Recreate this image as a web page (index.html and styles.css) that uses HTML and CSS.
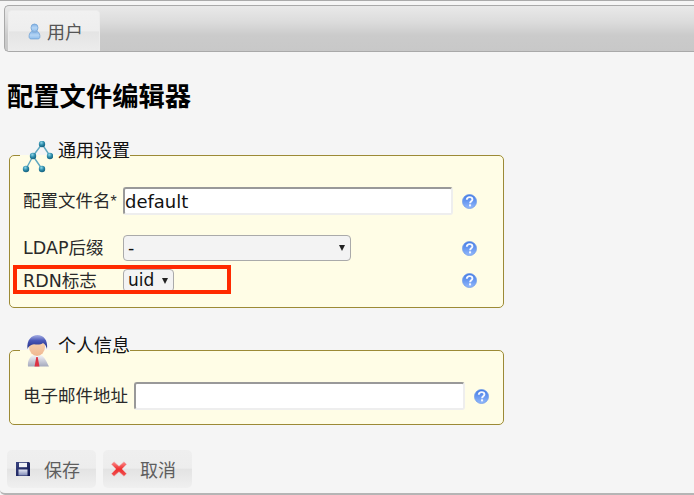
FILE: index.html
```html
<!DOCTYPE html>
<html lang="zh">
<head>
<meta charset="utf-8">
<title>配置文件编辑器</title>
<link rel="stylesheet" href="styles.css">
</head>
<body>
<div class="page">
  <nav class="tabbar">
    <a class="tab">
      <svg class="tab-icon" viewBox="0 0 14 17" width="13" height="17"><defs><linearGradient id="ub" x1="0" y1="0" x2="0" y2="1"><stop offset="0" stop-color="#7fb0e6"/><stop offset=".5" stop-color="#b5d5f4"/><stop offset="1" stop-color="#8fbdec"/></linearGradient></defs><path d="M4 8.200C1.800 9.600 1 12 1.200 14.600c.1 1.300 1.100 1.900 2.300 1.900h7c1.200 0 2.200-.6 2.300-1.900.2-2.600-.6-5-2.800-6.400-.9 .7-2 1-3 1s-2.100-.3-3-1z" fill="url(#ub)" stroke="#6d9fd3" stroke-width=".8"/><ellipse cx="7" cy="4.500" rx="3.800" ry="4.100" fill="url(#ub)" stroke="#6d9fd3" stroke-width=".8"/></svg>
      <span>用户</span>
    </a>
  </nav>
  <h1 class="title">配置文件编辑器</h1>

  <fieldset class="group group-general">
    <legend class="legend">
      <svg class="legend-icon icon-tree" viewBox="0 0 32 32" width="32" height="32">
        <defs><radialGradient id="node" cx=".4" cy=".3" r=".75"><stop offset="0" stop-color="#8fd6e8"/><stop offset=".5" stop-color="#2c8cab"/><stop offset="1" stop-color="#125a78"/></radialGradient></defs>
        <path d="M21 3 12 15M21 3l8 12M12 15 5 28M12 15l9 13" fill="none" stroke="#5fa8c0" stroke-width="1.400"/>
        <circle cx="21" cy="3" r="3.200" fill="url(#node)"/>
        <circle cx="12" cy="15" r="3.200" fill="url(#node)"/>
        <circle cx="29" cy="15" r="3.200" fill="url(#node)"/>
        <circle cx="5" cy="28" r="3.200" fill="url(#node)"/>
        <circle cx="21" cy="28" r="3.200" fill="url(#node)"/>
      </svg>
      <span class="legend-text">通用设置</span>
    </legend>
    <div class="form">
      <div class="row row-general row-text">
        <label class="label">配置文件名<span class="req">*</span></label>
        <input class="text-input" type="text" value="default">
        <svg class="help" viewBox="0 0 16 16" width="15" height="15"><use href="#help"/></svg>
      </div>
      <div class="row row-general row-wide">
        <label class="label">LDAP后缀</label>
        <div class="select-wrap wide"><select class="select"><option>-</option></select></div>
        <svg class="help" viewBox="0 0 16 16" width="15" height="15"><use href="#help"/></svg>
      </div>
      <div class="row row-general row-narrow">
        <label class="label">RDN标志</label>
        <div class="select-wrap narrow"><select class="select"><option>uid</option></select></div>
        <svg class="help" viewBox="0 0 16 16" width="15" height="15"><use href="#help"/></svg>
      </div>
    </div>
    <div class="highlight"></div>
  </fieldset>

  <fieldset class="group group-personal">
    <legend class="legend">
      <svg class="legend-icon icon-person" viewBox="0 0 32 33" width="32" height="33">
        <defs>
          <linearGradient id="hair" x1="0" y1="0" x2="0" y2="1"><stop offset="0" stop-color="#a8b0e4"/><stop offset=".4" stop-color="#4a58b8"/><stop offset="1" stop-color="#1e2a80"/></linearGradient>
          <linearGradient id="suit" x1="0" y1="0" x2="0" y2="1"><stop offset="0" stop-color="#f4f4f8"/><stop offset="1" stop-color="#a4a8bc"/></linearGradient>
          <linearGradient id="skin" x1="0" y1="0" x2="0" y2="1"><stop offset="0" stop-color="#f9d8b8"/><stop offset="1" stop-color="#f0b890"/></linearGradient>
        </defs>
        <path d="M7 32.500c-.5-5 1-9.500 5.500-11.500h7c4.500 2 6 6.500 8.500 11.500z" fill="url(#suit)"/>
        <path d="M13.500 20.500h5l-2.500 3z" fill="#f9f9f9"/>
        <path d="M15.300 23h1.400l1.800 9.500h-5z" fill="#dd3344"/>
        <ellipse cx="16" cy="13" rx="8" ry="9" fill="url(#skin)"/>
        <path d="M6.500 15C5.500 6 10.500 1 16.500 1s10.500 5 9.500 14c-.8-3-2-5-4-6-2 1.500-5 2-9 1.200-3 .3-5.500 1.800-6.500 4.800z" fill="url(#hair)"/>
      </svg>
      <span class="legend-text">个人信息</span>
    </legend>
    <div class="form">
      <div class="row row-personal">
        <label class="label">电子邮件地址</label>
        <input class="text-input" type="text">
        <svg class="help" viewBox="0 0 16 16" width="15" height="15"><use href="#help"/></svg>
      </div>
    </div>
  </fieldset>

  <div class="actions">
    <button class="btn" type="button">
      <svg class="btn-icon icon-save" viewBox="0 0 14 14" width="14" height="14"><defs><linearGradient id="fl" x1="0" y1="0" x2="1" y2="1"><stop offset="0" stop-color="#39437f"/><stop offset="1" stop-color="#0f1650"/></linearGradient><linearGradient id="fb" x1="0" y1="0" x2="0" y2="1"><stop offset="0" stop-color="#e4e7f2"/><stop offset="1" stop-color="#7f8ab8"/></linearGradient></defs><path d="M0 0h13l1 1v13H0z" fill="url(#fl)"/><rect x="3" y=".8" width="8" height="4.400" fill="#f1f3f8"/><rect x="2.500" y="7.500" width="9" height="6" fill="url(#fb)"/></svg>
      <span>保存</span>
    </button>
    <button class="btn" type="button">
      <svg class="btn-icon" viewBox="0 0 16 16" width="16" height="16"><defs><linearGradient id="xr" x1="0" y1="0" x2="0" y2="1"><stop offset="0" stop-color="#ff8a8a"/><stop offset=".5" stop-color="#ee3030"/><stop offset="1" stop-color="#f05050"/></linearGradient></defs><path d="M3 .8 8 5.200 13 .8l2.500 2.500L11 8l4.500 4.700-2.500 2.500L8 10.800 3 15.200.5 12.700 5 8 .5 3.300z" fill="url(#xr)" stroke="#e8b0b0" stroke-width=".5"/></svg>
      <span>取消</span>
    </button>
  </div>
</div>
<svg class="defs" width="0" height="0">
  <defs>
    <linearGradient id="hb" x1="0" y1="0" x2="0" y2="1"><stop offset="0" stop-color="#3f78e4"/><stop offset="1" stop-color="#93b9fc"/></linearGradient>
    <g id="help">
      <circle cx="8" cy="8" r="7.500" fill="url(#hb)" stroke="#6f9be8" stroke-width=".8"/>
      <path d="M5.100 6.200C5.200 4.300 6.500 3.300 8.100 3.300c1.800 0 3 1 3 2.500 0 2-2.400 2-2.500 4" fill="none" stroke="#f4f7ff" stroke-width="2"/>
      <rect x="7.500" y="11" width="2.200" height="2.200" fill="#f4f7ff"/>
    </g>
  </defs>
</svg>
</body>
</html>
```
FILE: styles.css
```css
* { box-sizing: border-box; }
html, body { margin: 0; padding: 0; height: 100%; }
body {
  background: #f5f5f5;
  font-family: "DejaVu Sans", "Noto Sans CJK SC", sans-serif;
  font-size: 17.5px;
  color: #222;
  overflow: hidden;
}
.defs { position: absolute; }
.page {
  height: 495px;
  padding: 5px 0 0 0;
  border-top: 1px solid #aaa;
  border-bottom: 2px solid #b5b5b5;
  border-bottom-left-radius: 5px;
}
.tabbar {
  margin: -1px 0 0 4px;
  height: 47px;
  padding: 4px 0 0 3px;
  display: flex;
  align-items: flex-end;
  border: 1px solid #a9a9a9;
  border-right: 0;
  border-radius: 5px 0 0 5px;
  background: linear-gradient(#e9e9e9, #dcdcdc 35%, #cbcbcb 65%, #c8c8c8);
}
.tab {
  width: 92px;
  height: 41px;
  display: flex;
  align-items: center;
  justify-content: center;
  gap: 6px;
  padding-left: 3px;
  font-size: 18px;
  color: #555;
  border-radius: 4px 4px 0 0;
  border: 1px solid #ececec;
  border-bottom: 0;
  background: linear-gradient(#f1f1f1, #eeeeee 50%, #e4e4e4 52%, #ececec);
}
.title {
  margin: 28px 0 0 7px;
  font-size: 26.3px;
  line-height: 30px;
  font-weight: 700;
  color: #000;
  font-family: "Noto Sans CJK SC", sans-serif;
}
.group {
  position: relative;
  margin: 0 0 0 9px;
  width: 495px;
  padding: 0 0 15px 13px;
  border: 1px solid #9c8a36;
  border-radius: 5px;
  background: #fffde6;
}
.group-general { margin-top: 33px; }
.group-personal { margin-top: 30px; }
.group-personal { padding-bottom: 14px; }
.legend {
  display: flex;
  align-items: center;
  gap: 5px;
  height: 24px;
  margin-left: -3px;
  padding: 0;
  color: #111;
  font-size: 18px;
  line-height: 24px;
  width: 110px;
  position: relative;
}
.legend-text { margin-bottom: 8px; }
.legend-icon { flex: none; margin-left: 1px; }
.icon-tree { margin-top: 2px; margin-bottom: -2px; }
.icon-person { margin-top: 1px; margin-bottom: 0; }
.form { padding-top: 20px; }
.row { display: grid; align-items: center; column-gap: 8px; }
.row-general { grid-template-columns: 92px 330px 15px; }
.row-personal { grid-template-columns: 103px 331px 15px; }
.row-wide { margin-top: 20px; }
.row-narrow { margin-top: 8px; }
.label { white-space: nowrap; color: #2a2a2a; line-height: 20px; }
.req { font-family: "Liberation Sans", sans-serif; font-size: 16px; }
.help { margin-left: 1px; }
.text-input {
  height: 28px;
  width: 100%;
  padding: 0;
  font: inherit;
  font-size: 18px;
  color: #111;
  background: #fff;
  border: 2px solid;
  border-color: #999 #eee #eee #999;
  border-radius: 3px;
  outline: 0;
}
.select-wrap { position: relative; }
.select-wrap::after {
  content: "";
  position: absolute;
  top: 50%;
  margin-top: -3px;
  right: 6px;
  border: 3.5px solid transparent;
  border-top: 6px solid #222;
  border-bottom: 0;
}
.select {
  display: block;
  width: 100%;
  appearance: none;
  font: inherit;
  color: #111;
  background: #f3f3f3;
  border: 1px solid #aaa;
  border-radius: 4px;
  outline: 0;
}
.wide { width: 228px; }
.wide .select { height: 26px; padding: 0 4px; }
.narrow { width: 51px; }
.narrow .select { height: 23px; padding: 0 4px; font-size: 17px; line-height: 21px; }
.highlight {
  position: absolute;
  left: 3px;
  top: 98px;
  width: 218px;
  height: 29px;
  border: 4px solid #ff2a00;
  pointer-events: none;
}
.actions { display: flex; gap: 7px; margin: 25px 0 0 7px; }
.btn {
  width: 89px;
  height: 38px;
  display: flex;
  align-items: center;
  padding: 0 0 0 8px;
  gap: 13px;
  border: 0;
  border-radius: 5px;
  font: inherit;
  font-size: 18px;
  color: #5e5e5e;
  background: linear-gradient(#efefef, #ededed 48%, #e3e3e3 50%, #f0f0f0);
}
.icon-save { margin: 0 1px; }
```
